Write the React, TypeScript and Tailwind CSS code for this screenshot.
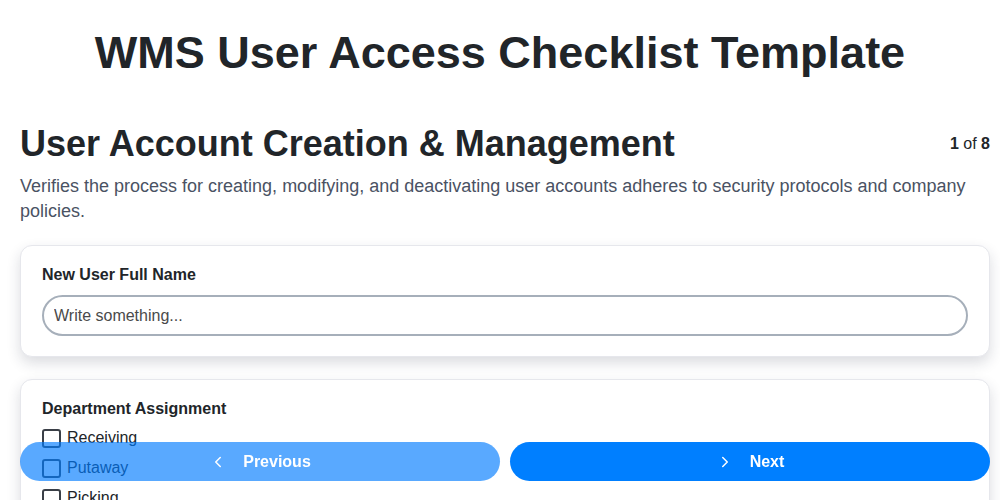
import { ChevronLeft, ChevronRight } from "lucide-react";

const departments = ["Receiving", "Putaway", "Picking", "Packing", "Shipping", "Inventory Control"];

const Card = ({ children }: { children: React.ReactNode }) => (
  <div className="rounded-xl border border-[#e6e7ec] bg-white px-[21px] pt-[17px] pb-5 shadow-[0_6px_14px_rgba(30,35,60,0.16)]">
    {children}
  </div>
);

export default function App() {
  return (
    <div className="min-h-screen bg-white pb-32 text-[#212529] [font-family:'Liberation_Sans',Arial,sans-serif]">
      <h1 className="pt-[26px] text-center text-[45px] leading-[1.2] font-bold">
        WMS User Access Checklist Template
      </h1>

      <div className="pl-5 pr-[10px]">
        <div className="mt-[44px] flex items-center justify-between">
          <h2 className="text-4xl font-bold">User Account Creation &amp; Management</h2>
          <div className="text-base">
            <span className="font-bold">1</span> of <span className="font-bold">8</span>
          </div>
        </div>
        <p className="mt-[10px] text-lg leading-[1.4] text-[#4a5263]">
          Verifies the process for creating, modifying, and deactivating user accounts adheres to security protocols and
          company policies.
        </p>

        <div className="mt-[21px] flex flex-col gap-[22px]">
          <Card>
            <label className="block text-base font-bold">New User Full Name</label>
            <input
              type="text"
              placeholder="Write something..."
              className="mt-2 h-[41px] w-full rounded-full border-2 border-[#a6afba] px-[10px] text-base text-[#333] placeholder:text-[#4a4a4a] outline-none"
            />
          </Card>

          <Card>
            <div className="text-base font-bold">Department Assignment</div>
            <div className="mt-[2px] flex flex-col">
              {departments.map((d) => (
                <label key={d} className="flex h-[30px] items-center gap-[6px] text-base">
                  <span className="h-[19px] w-[19px] rounded-[3px] border-2 border-[#3a3f47] bg-white" />
                  {d}
                </label>
              ))}
            </div>
          </Card>

          <Card>
            <div className="text-base font-bold">Role &amp; Permission Level</div>
            <input
              type="text"
              placeholder="Write something..."
              className="mt-2 h-[41px] w-full rounded-full border-2 border-[#a6afba] px-[10px] text-base placeholder:text-[#4a4a4a] outline-none"
            />
          </Card>
        </div>
      </div>

      <div className="fixed right-[10px] bottom-[19px] left-5 flex gap-[10px]">
        <button className="flex h-[39px] flex-1 items-center justify-center gap-4 rounded-full bg-[#007bff]/65 text-base font-bold text-white">
          <ChevronLeft size={18} strokeWidth={2} />
          Previous
        </button>
        <button className="flex h-[39px] flex-1 items-center justify-center gap-4 rounded-full bg-[#007fff] text-base font-bold text-white">
          <ChevronRight size={18} strokeWidth={2} />
          Next
        </button>
      </div>
    </div>
  );
}
